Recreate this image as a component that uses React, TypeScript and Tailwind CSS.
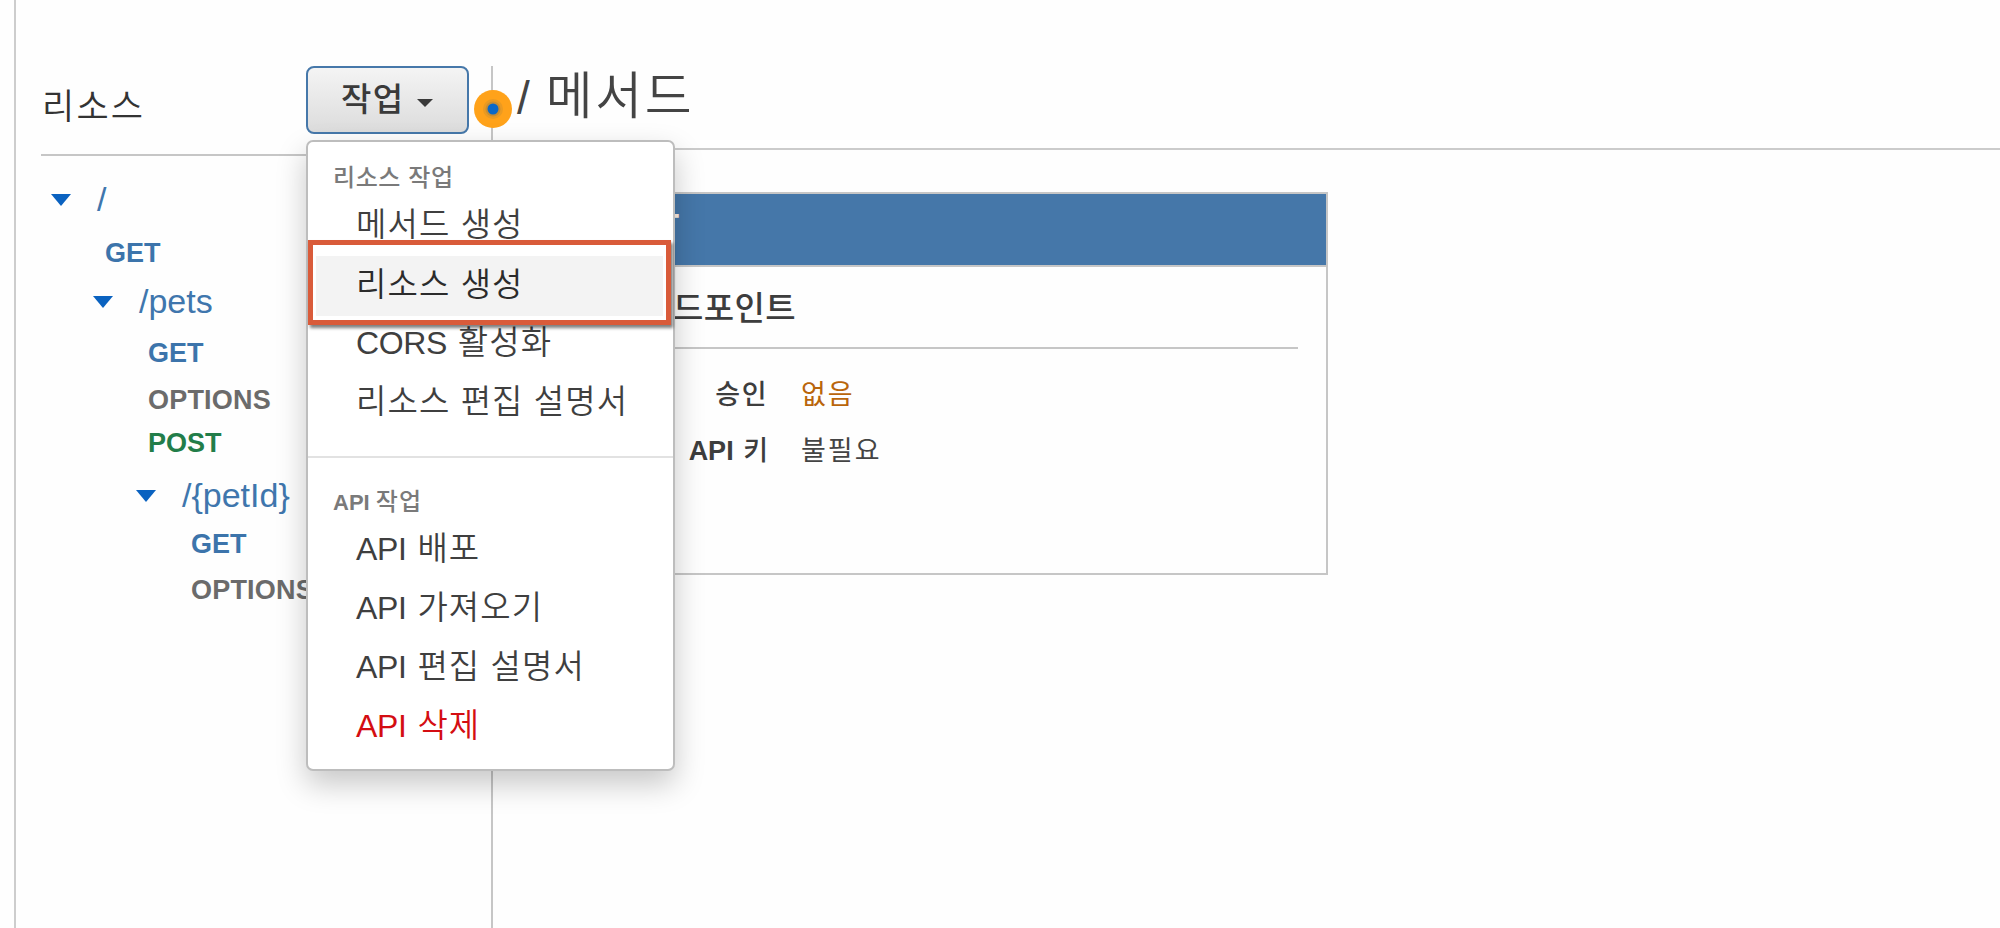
import type { ReactNode } from "react";

type TreeRow = {
  label: string;
  kind: "path" | "method";
  className: string;
};

type MenuItem = {
  latin?: string;
  label: string;
  danger?: boolean;
};

const tree: TreeRow[] = [
  { label: "/", kind: "path", className: "mt-[23px] pl-[10px]" },
  { label: "GET", kind: "method", className: "mt-[14px] pl-[64px] text-[#3c74ab]" },
  { label: "/pets", kind: "path", className: "mt-[8px] pl-[52px]" },
  { label: "GET", kind: "method", className: "mt-[12px] pl-[107px] text-[#3c74ab]" },
  { label: "OPTIONS", kind: "method", className: "mt-[7px] pl-[107px] tracking-[0.2px] text-[#6b6b6b]" },
  { label: "POST", kind: "method", className: "mt-[3px] pl-[107px] text-[#227d49]" },
  { label: "/{petId}", kind: "path", className: "mt-[12px] pl-[95px]" },
  { label: "GET", kind: "method", className: "mt-[9px] pl-[150px] text-[#3c74ab]" },
  { label: "OPTIONS", kind: "method", className: "mt-[6px] pl-[150px] tracking-[0.2px] text-[#6b6b6b]" },
];

const resourceActions: MenuItem[] = [
  { label: "메서드 생성" },
  { label: "리소스 생성" },
  { latin: "CORS", label: "활성화" },
  { label: "리소스 편집 설명서" },
];

const apiActions: MenuItem[] = [
  { latin: "API", label: "배포" },
  { latin: "API", label: "가져오기" },
  { latin: "API", label: "편집 설명서" },
  { latin: "API", label: "삭제", danger: true },
];

function Caret({ className }: { className: string }) {
  return (
    <svg viewBox="0 0 20 12" preserveAspectRatio="none" className={className} fill="currentColor">
      <path d="M0 0H20L10 12Z" />
    </svg>
  );
}

function TreeLine({ row }: { row: TreeRow }) {
  if (row.kind === "path") {
    return (
      <div className={`flex h-[40px] items-center text-[34px] leading-[40px] text-[#3f76ad] ${row.className}`}>
        <Caret className="mt-[2px] h-[12px] w-[20px] shrink-0 text-[#0a62c0]" />
        <span className="ml-[26px]">{row.label}</span>
      </div>
    );
  }
  return (
    <div className={`h-[40px] text-[27px] leading-[40px] font-bold whitespace-nowrap ${row.className}`}>{row.label}</div>
  );
}

function GroupTitle({ children, className }: { children: ReactNode; className: string }) {
  return (
    <div className={`h-[30px] pl-[25px] text-[22px] leading-[30px] font-bold text-[#7a7a7a] ${className}`}>
      {children}
    </div>
  );
}

function MenuRow({ item }: { item: MenuItem }) {
  return (
    <li
      className={`h-[59px] pl-[48px] text-[32px] leading-[59px] whitespace-nowrap ${
        item.danger ? "text-[#d40d12]" : "text-[#3f3f3f]"
      }`}
    >
      {item.latin && <span className="mr-[11px] tracking-[-0.4px]">{item.latin}</span>}
      <span className="text-[33px] font-[350] tracking-[1.1px]">{item.label}</span>
    </li>
  );
}

function ActionMenu() {
  return (
    <div className="absolute top-[74px] left-0 z-10 h-[631px] w-[369px] rounded-[7px] border-2 border-[#bdbdbd] bg-white shadow-[0_13px_30px_rgba(0,0,0,0.22)]">
      <GroupTitle className="mt-[21px]">
        <span className="text-[24px] font-medium tracking-[0.6px]">리소스 작업</span>
      </GroupTitle>
      <ul className="mt-[2px]">
        {resourceActions.map((item) => (
          <MenuRow key={item.label} item={item} />
        ))}
      </ul>
      <div className="mt-[25px] h-[2px] bg-[#e2e2e2]" />
      <GroupTitle className="mt-[29px]">
        API <span className="text-[24px] font-medium tracking-[1.2px]">작업</span>
      </GroupTitle>
      <ul className="mt-[2px]">
        {apiActions.map((item) => (
          <MenuRow key={item.label} item={item} />
        ))}
      </ul>

      {/* callout around the hovered row */}
      <div className="absolute top-[98px] left-0 h-[85px] w-[363px] border-[5px] border-[#d95b3a] bg-white px-[3px] pt-[11px] shadow-[2px_3px_3px_rgba(0,0,0,0.5)]">
        <div className="h-[60px] bg-[#f3f3f3] pl-[40px] text-[33px] leading-[57px] font-[350] tracking-[1.1px] text-[#2b2b2b]">
          리소스 생성
        </div>
      </div>
    </div>
  );
}

function Field({ name, children }: { name: ReactNode; children: ReactNode }) {
  return (
    <div className="flex h-[56px] items-center text-[27px] leading-[56px]">
      <div className="w-[273px] text-right font-bold text-[#3d3d3d]">{name}</div>
      <div className="ml-[33px] tracking-[2px]">{children}</div>
    </div>
  );
}

export default function App() {
  return (
    <div className="flex h-[928px] w-[2000px] overflow-hidden bg-[#fefefe] pl-[14px] font-['Liberation_Sans','Noto_Sans_CJK_KR',sans-serif] text-[#444]">
      <div className="flex flex-1 border-l-2 border-[#cdcdcd]">
        <aside className="w-[475px] shrink-0 pt-[66px] pl-[25px]">
          <div className="flex h-[90px] border-b-2 border-[#c6c6c6]">
            <h2 className="mt-[16px] h-[50px] w-[265px] pl-[1px] text-[35px] leading-[50px] font-[350] tracking-[2.2px] text-[#333]">
              리소스
            </h2>
            <div className="relative">
              <button
                type="button"
                className="flex h-[68px] w-[163px] items-center rounded-[8px] border-2 border-[#4678aa] bg-linear-to-b from-[#f4f4f4] to-[#dcdcdc] pl-[33px] text-[33px] leading-[64px] font-medium text-[#3a3a3a]"
              >
                <span className="tracking-[1.5px]">작업</span>
                <Caret className="mt-[5px] ml-[12px] h-[8px] w-[16px]" />
              </button>
              <ActionMenu />
            </div>
          </div>
          {tree.map((row, i) => (
            <TreeLine key={i} row={row} />
          ))}
        </aside>

        <main className="relative mt-[66px] flex-1 border-l-2 border-[#c6c6c6]">
          <svg viewBox="0 0 40 40" className="absolute top-[23px] left-[-20px] size-[40px]">
            <circle cx="20" cy="20" r="19" fill="#ffa21a" />
            <circle cx="20" cy="20" r="10" fill="#ea9a22" />
            <circle cx="20" cy="20" r="7.5" fill="#c98d32" />
            <circle cx="20" cy="20" r="5.5" fill="#0a68c8" />
          </svg>
          <h1 className="h-[84px] border-b-2 border-[#cbcbcb] pl-[24px] text-[46px] leading-[61px] text-[#444]">
            <span className="mr-[16px]">/</span>
            <span className="text-[51px] font-[350] tracking-[2.6px]">메서드</span>
          </h1>
          <section className="mt-[42px] h-[383px] w-[835px] border-2 border-[#c6c6c6]">
            <div className="h-[73px] border-b-2 border-[#c6c6c6] bg-[#4577a9]">
              <div className="w-[184px] pt-[6px] text-right text-[34px] leading-[50px] font-bold text-[#fff0e4]">GET</div>
            </div>
            <div className="mr-[28px] h-[82px] border-b-2 border-[#c6c6c6]">
              <div className="w-[301px] pt-[17px] text-right text-[33px] leading-[50px] font-medium tracking-[0.4px] text-[#3d3d3d]">
                엔드포인트
              </div>
            </div>
            <div className="mt-[18px]">
              <Field name={<span className="font-medium tracking-[1.5px]">승인</span>}>
                <span className="text-[#b9650b]">없음</span>
              </Field>
              <Field
                name={
                  <>
                    <span className="mr-[2px]">API</span> <span className="font-medium">키</span>
                  </>
                }
              >
                불필요
              </Field>
            </div>
          </section>
        </main>
      </div>
    </div>
  );
}
